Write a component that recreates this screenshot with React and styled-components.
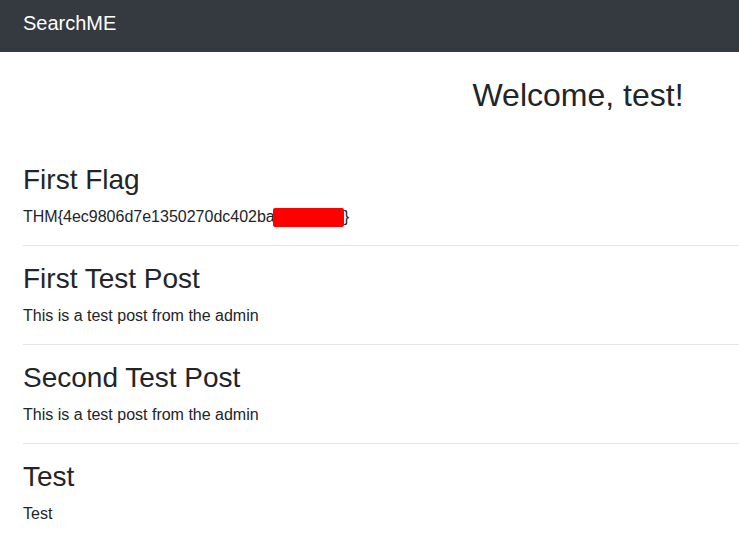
import React from "react";
import styled, { createGlobalStyle } from "styled-components";

const posts = [
  { title: "First Test Post", body: "This is a test post from the admin" },
  { title: "Second Test Post", body: "This is a test post from the admin" },
  { title: "Test", body: "Test" },
];

export default function App() {
  return (
    <>
      <GlobalStyle />
      <Navbar>
        <Brand>SearchME</Brand>
      </Navbar>
      <Container>
        <Welcome>Welcome, test!</Welcome>
        <Post>
          <PostTitle>First Flag</PostTitle>
          <PostBody>
            THM{"{"}4ec9806d7e1350270dc402ba
            <Redacted />
            {"}"}
          </PostBody>
        </Post>
        {posts.map((p) => (
          <React.Fragment key={p.title}>
            <Divider />
            <Post>
              <PostTitle>{p.title}</PostTitle>
              <PostBody>{p.body}</PostBody>
            </Post>
          </React.Fragment>
        ))}
      </Container>
    </>
  );
}

const GlobalStyle = createGlobalStyle`
  html, body {
    margin: 0;
    overflow-x: hidden;
    background: #fff;
    font-family: "Liberation Sans", Arial, sans-serif;
    font-size: 16px;
    line-height: 1.5;
    color: #212529;
  }
`;

const Navbar = styled.nav`
  display: flex;
  align-items: flex-start;
  height: 52px;
  box-sizing: border-box;
  padding: 8px 23px 0;
  background: #343a40;
`;

const Brand = styled.a`
  font-size: 20px;
  line-height: 30px;
  color: #fff;
  text-decoration: none;
  white-space: nowrap;
`;

const Container = styled.main`
  width: 1110px;
  margin-left: 23px;
  padding-top: 24px;
`;

const Welcome = styled.h2`
  margin: 0 0 49px;
  font-size: 32px;
  font-weight: 500;
  line-height: 1.2;
  text-align: center;
`;

const Post = styled.section`
  display: flex;
  flex-direction: column;
`;

const PostTitle = styled.h3`
  margin: 0 0 8px;
  font-size: 28px;
  font-weight: 500;
  line-height: 34px;
`;

const PostBody = styled.p`
  margin: 0;
  display: flex;
  align-items: center;
  height: 24px;
`;

const Redacted = styled.span`
  display: inline-block;
  width: 71px;
  height: 19px;
  margin-left: -2px;
  border-radius: 2px;
  background: #ff0000;
`;

const Divider = styled.hr`
  margin: 16px 0;
  border: 0;
  border-top: 1px solid rgba(0, 0, 0, 0.1);
`;
